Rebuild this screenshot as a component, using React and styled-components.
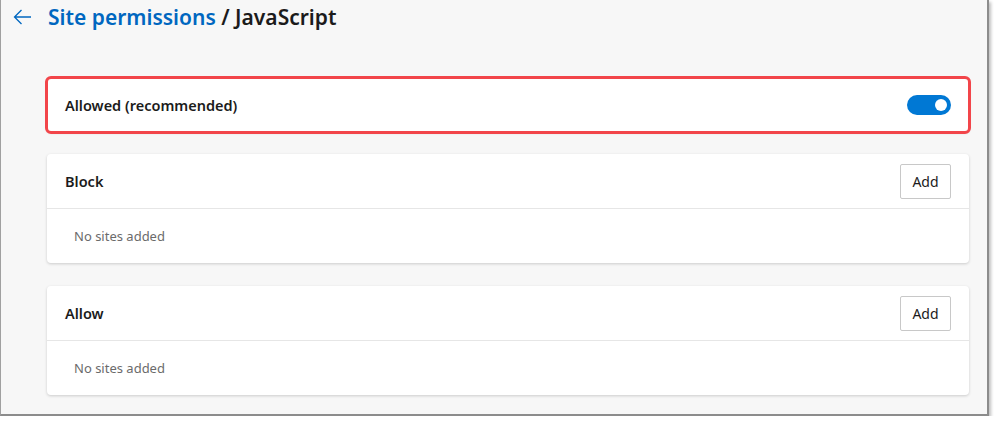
import React from "react";
import styled, { createGlobalStyle } from "styled-components";

const Global = createGlobalStyle`
  body {
    margin: 0;
    background: #ffffff;
    font-family: "Segoe UI", "Noto Sans", "Open Sans", sans-serif;
  }
`;

const Frame = styled.div`
  width: 989px;
  height: 416px;
  box-sizing: border-box;
  background: #f7f7f7;
  border-left: 1px solid #a0a0a0;
  border-right: 2px solid #8c8c8c;
  border-bottom: 2px solid #8c8c8c;
  box-shadow: 2px 2px 3px rgba(0, 0, 0, 0.25);
  padding: 0 0 0 46px;
`;

const Header = styled.div`
  display: flex;
  align-items: center;
  height: 34px;
  margin-left: -34px;
  gap: 15px;
`;

const Back = styled.button`
  border: none;
  background: transparent;
  padding: 0;
  width: 20px;
  height: 20px;
  display: flex;
  align-items: center;
  color: #0067c0;
`;

const Title = styled.h1`
  margin: 0;
  font-size: 21px;
  font-weight: 600;
  color: #1b1b1b;
  span {
    color: #0067c0;
  }
`;

const List = styled.div`
  display: flex;
  flex-direction: column;
  gap: 22px;
  width: 922px;
  margin-top: 44px;
`;

const Card = styled.div`
  background: #fff;
  border-radius: 4px;
  box-shadow: 0 1px 3px rgba(0, 0, 0, 0.18);
  outline: ${(p) => (p.$marked ? "3px solid #f2454a" : "none")};
  outline-offset: -1px;
  margin-top: ${(p) => p.$push || 0}px;
`;

const Row = styled.div`
  display: flex;
  align-items: center;
  justify-content: space-between;
  height: 54px;
  padding: 0 18px 0 18px;
  border-bottom: ${(p) => (p.$divider ? "1px solid #e6e6e6" : "none")};
`;

const Label = styled.div`
  font-size: 14.5px;
  font-weight: 600;
  color: #1b1b1b;
`;

const Empty = styled.div`
  height: 54px;
  display: flex;
  align-items: center;
  padding-left: 27px;
  font-size: 13px;
  color: #6b6b6b;
`;

const AddButton = styled.button`
  width: 51px;
  height: 35px;
  box-sizing: border-box;
  border: 1px solid #c8c8c8;
  border-radius: 2px;
  background: #fff;
  font-family: inherit;
  font-size: 14px;
  color: #1b1b1b;
`;

const Toggle = styled.div`
  width: 44px;
  height: 20px;
  border-radius: 10px;
  background: #0078d4;
  display: flex;
  align-items: center;
  justify-content: flex-end;
  padding-right: 4px;
  box-sizing: border-box;
  &::after {
    content: "";
    width: 12px;
    height: 12px;
    border-radius: 50%;
    background: #fff;
  }
`;

const SiteList = ({ title, push }) => (
  <Card $push={push}>
    <Row $divider>
      <Label>{title}</Label>
      <AddButton>Add</AddButton>
    </Row>
    <Empty>No sites added</Empty>
  </Card>
);

export default function App() {
  return (
    <>
      <Global />
      <Frame>
        <Header>
          <Back aria-label="Back">
            <svg width="19" height="16" viewBox="0 0 19 16" fill="none">
              <path d="M18 8H1.5M8.5 1L1.5 8l7 7" stroke="currentColor" strokeWidth="1.3" />
            </svg>
          </Back>
          <Title>
            <span>Site permissions</span> / JavaScript
          </Title>
        </Header>
        <List>
          <Card $marked>
            <Row>
              <Label>Allowed (recommended)</Label>
              <Toggle />
            </Row>
          </Card>
          <SiteList title="Block" />
          <SiteList title="Allow" push={1} />
        </List>
      </Frame>
    </>
  );
}
